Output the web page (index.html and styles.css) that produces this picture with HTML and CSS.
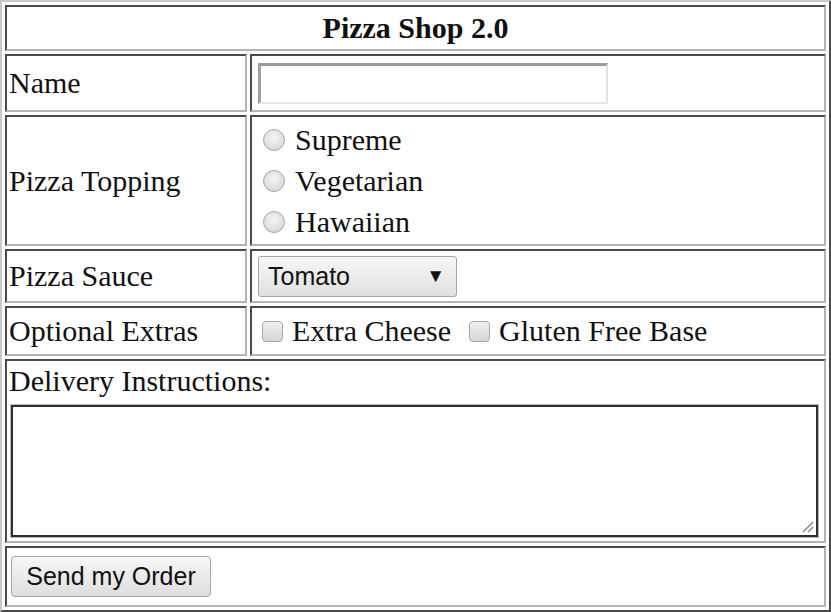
FILE: index.html
```html
<!DOCTYPE html>
<html>
<head>
<meta charset="utf-8">
<title>Pizza Shop 2.0</title>
<link rel="stylesheet" href="styles.css">
</head>
<body>
<form class="order-form">
<table class="order">
  <tr class="row-title"><th colspan="2" class="title">Pizza Shop 2.0</th></tr>
  <tr class="row-name">
    <td class="label">Name</td>
    <td class="field"><input type="text" class="text-input"></td>
  </tr>
  <tr class="row-topping">
    <td class="label">Pizza Topping</td>
    <td class="field">
      <label class="opt"><input type="radio" name="topping" class="radio"><span>Supreme</span></label>
      <label class="opt"><input type="radio" name="topping" class="radio"><span>Vegetarian</span></label>
      <label class="opt"><input type="radio" name="topping" class="radio"><span>Hawaiian</span></label>
    </td>
  </tr>
  <tr class="row-sauce">
    <td class="label">Pizza Sauce</td>
    <td class="field">
      <div class="select"><span class="select-text">Tomato</span><span class="select-arrow">&#9660;</span></div>
    </td>
  </tr>
  <tr class="row-extras">
    <td class="label">Optional Extras</td>
    <td class="field">
      <div class="extras">
        <label class="chk"><input type="checkbox" class="checkbox"><span>Extra Cheese</span></label>
        <label class="chk"><input type="checkbox" class="checkbox"><span>Gluten Free Base</span></label>
      </div>
    </td>
  </tr>
  <tr class="row-delivery">
    <td colspan="2" class="delivery">
      <div class="delivery-label">Delivery Instructions:</div>
      <div class="ta-wrap">
        <textarea class="textarea"></textarea>
        <svg class="grip" width="14" height="14" viewBox="0 0 14 14"><path d="M13 3 L3 13 M13 8 L8 13" stroke="#8a8a8a" stroke-width="1.5" fill="none"/></svg>
      </div>
    </td>
  </tr>
  <tr class="row-send">
    <td colspan="2" class="send"><button type="button" class="button">Send my Order</button></td>
  </tr>
</table>
</form>
</body>
</html>
```
FILE: styles.css
```css
html, body {
  margin: 0;
  padding: 0;
  background: #ffffff;
}
.order-form {
  margin: 0;
}
.order {
  width: 831px;
  border-collapse: separate;
  border-spacing: 3px;
  border-style: solid;
  border-width: 2px;
  border-color: #c8c8c8 #4a4a4a #4a4a4a #c8c8c8;
  font-family: "Liberation Serif", "Times New Roman", serif;
  font-size: 30px;
  color: #111;
}
.order th,
.order td {
  border-style: solid;
  border-width: 2px;
  border-color: #4a4a4a #b4b4b4 #b4b4b4 #4a4a4a;
  padding: 2px;
  vertical-align: middle;
}
.title {
  font-weight: bold;
  text-align: center;
}
.row-title { height: 46px; }
.row-name { height: 58px; }
.row-topping { height: 131px; }
.row-sauce { height: 54px; }
.row-extras { height: 50px; }
.row-delivery { height: 184px; }
.row-send { height: 61px; }

.label {
  width: 234px;
  text-align: left;
}
.text-input {
  display: block;
  box-sizing: border-box;
  width: 350px;
  height: 41px;
  margin: 0 0 0 4px;
  border-style: solid;
  border-width: 3px 2px 2px 3px;
  border-color: #9a9a9a #e2e2e2 #e6e6e6 #a0a0a0;
  background: #fff;
  outline: none;
}
.opt {
  display: flex;
  align-items: center;
  height: 41px;
}
.radio {
  appearance: none;
  -webkit-appearance: none;
  box-sizing: border-box;
  width: 22px;
  height: 22px;
  margin: 0 10px 0 9px;
  border-radius: 50%;
  border: 1px solid #a8a8a8;
  background: radial-gradient(circle at 50% 40%, #f4f4f4 0%, #dcdcdc 70%, #cfcfcf 100%);
}
.select {
  box-sizing: border-box;
  width: 199px;
  height: 41px;
  margin-left: 4px;
  display: flex;
  align-items: center;
  justify-content: space-between;
  padding: 0 11px 0 9px;
  border: 1px solid #a6a6a6;
  border-radius: 3px;
  background: linear-gradient(#f7f7f7, #e0e0e0);
  font-family: "Liberation Sans", Arial, sans-serif;
  font-size: 25px;
  color: #111;
}
.select-arrow {
  font-size: 19px;
  color: #111;
}
.extras {
  display: flex;
  align-items: center;
}
.chk {
  display: flex;
  align-items: center;
}
.checkbox {
  appearance: none;
  -webkit-appearance: none;
  box-sizing: border-box;
  width: 21px;
  height: 21px;
  margin: 0 9px 0 8px;
  border: 1px solid #a8a8a8;
  border-radius: 4px;
  background: linear-gradient(#f0f0f0, #d6d6d6);
}
.chk + .chk .checkbox {
  margin-left: 18px;
}
.order td.delivery {
  vertical-align: top;
}
.delivery-label {
  line-height: 35px;
}
.ta-wrap {
  position: relative;
  width: 807px;
  height: 132px;
  margin: 7px 0 0 2px;
}
.textarea {
  display: block;
  box-sizing: border-box;
  width: 807px;
  height: 132px;
  margin: 0;
  border: 2px solid #2e2e2e;
  box-shadow: 0 0 0 1px #b8b8b8;
  resize: none;
  outline: none;
  background: #fff;
}
.grip {
  position: absolute;
  right: 4px;
  bottom: 4px;
}
.send {
  text-align: left;
}
.button {
  display: block;
  box-sizing: border-box;
  width: 200px;
  height: 41px;
  margin-left: 2px;
  padding: 0;
  border: 1px solid #a6a6a6;
  border-radius: 4px;
  background: linear-gradient(#f7f7f7, #dedede);
  font-family: "Liberation Sans", Arial, sans-serif;
  font-size: 25px;
  color: #111;
}
```
